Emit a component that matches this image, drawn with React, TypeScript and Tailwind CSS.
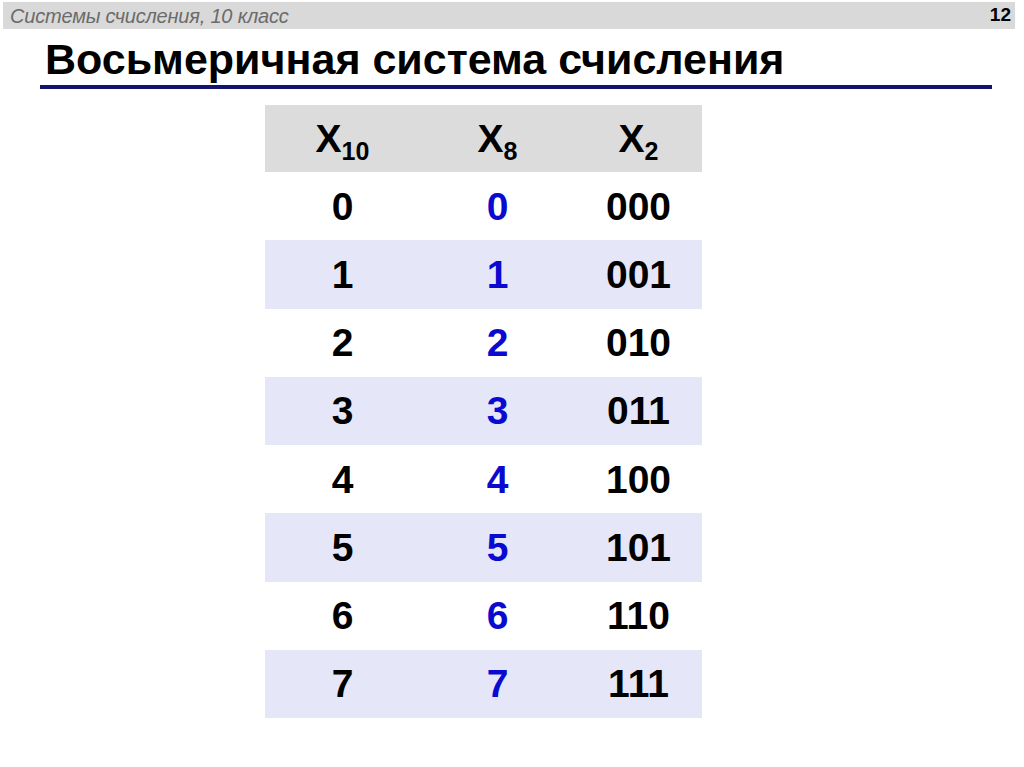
const rows = [
  ["0", "0", "000"],
  ["1", "1", "001"],
  ["2", "2", "010"],
  ["3", "3", "011"],
  ["4", "4", "100"],
  ["5", "5", "101"],
  ["6", "6", "110"],
  ["7", "7", "111"],
];

function Header({ sub }: { sub: string }) {
  return (
    <span className="text-[39px] font-bold leading-none">
      X<sub className="text-[25px] align-baseline relative top-[8px]">{sub}</sub>
    </span>
  );
}

export default function App() {
  return (
    <div className="w-[1024px] h-[767px] bg-white overflow-hidden font-['Liberation_Sans',Arial,sans-serif] text-black">
      <div className="pt-[2px] pl-[3px] pr-[9px]">
        <div className="h-[27px] bg-[#d9d9d9] flex items-center justify-between pl-[7px] pr-[4px]">
          <span className="italic text-[20px] tracking-[-0.2px] text-[#6b6b6b]">
            Системы счисления, 10 класс
          </span>
          <span className="font-bold text-[19px]">12</span>
        </div>
      </div>
      <div className="pl-[40px] pr-[32px]">
        <h1 className="pl-[5px] pt-[7px] h-[56px] text-[43px] leading-[46px] font-bold">
          Восьмеричная система счисления
        </h1>
        <div className="h-[4px] bg-[#14146e]" />
      </div>
      <div className="pl-[265px] pt-[16px]">
        <div className="w-[437px]">
          <div className="grid grid-cols-[155px_155px_127px] h-[67px] bg-[#dcdcdc] items-center">
            <div className="text-center"><Header sub="10" /></div>
            <div className="text-center"><Header sub="8" /></div>
            <div className="text-center"><Header sub="2" /></div>
          </div>
          {rows.map((r, i) => (
            <div
              key={i}
              className={`grid grid-cols-[155px_155px_127px] h-[68.25px] items-center text-[39px] font-bold leading-none ${i % 2 === 1 ? "bg-[#e6e6f9]" : "bg-white"}`}
            >
              <div className="text-center">{r[0]}</div>
              <div className="text-center text-[#0a0ad0]">{r[1]}</div>
              <div className="text-center">{r[2]}</div>
            </div>
          ))}
        </div>
      </div>
    </div>
  );
}
